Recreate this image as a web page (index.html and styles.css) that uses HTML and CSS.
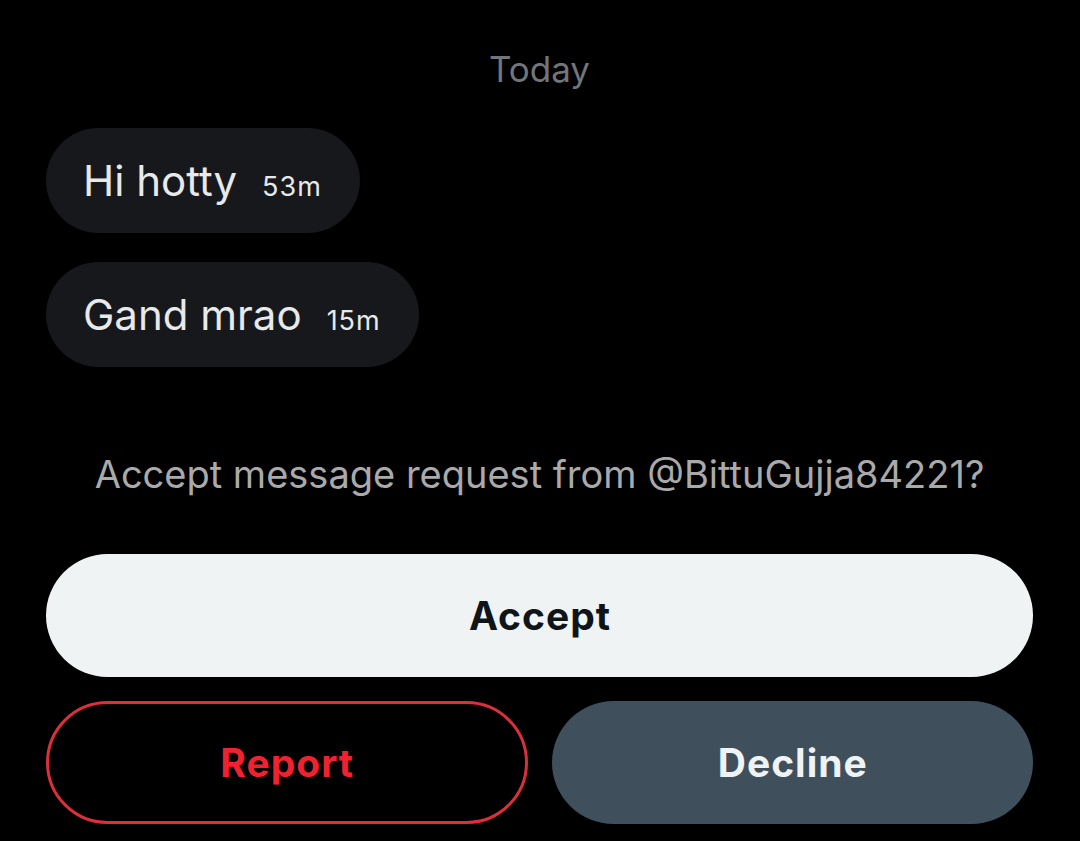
FILE: index.html
```html
<!DOCTYPE html>
<html lang="en">
<head>
<meta charset="utf-8">
<title>Message request</title>
<link rel="stylesheet" href="styles.css">
</head>
<body>
<main class="screen">
  <div class="day">Today</div>
  <div class="messages">
    <div class="bubble"><span class="msg">Hi hotty</span><span class="time">53m</span></div>
    <div class="bubble"><span class="msg">Gand mrao</span><span class="time">15m</span></div>
  </div>
  <p class="prompt">Accept message request from @BittuGujja84221?</p>
  <div class="actions">
    <button class="btn accept">Accept</button>
    <div class="row">
      <button class="btn report">Report</button>
      <button class="btn decline">Decline</button>
    </div>
  </div>
</main>
</body>
</html>
```
FILE: styles.css
```css
html, body {
  margin: 0;
  padding: 0;
  background: #000;
}
body {
  font-family: Inter, Roboto, "Noto Sans", "Liberation Sans", sans-serif;
  width: 1080px;
  height: 841px;
  overflow: hidden;
}
.screen {
  display: flex;
  flex-direction: column;
  padding: 46px 47px 0 46px;
}
.day {
  text-align: center;
  color: #71767b;
  font-size: 35px;
  line-height: 46px;
}
.messages {
  display: flex;
  flex-direction: column;
  align-items: flex-start;
  gap: 29px;
  margin-top: 36px;
}
.bubble {
  display: flex;
  align-items: baseline;
  gap: 25px;
  height: 105px;
  box-sizing: border-box;
  padding: 0 38px 0 37px;
  background: #16181c;
  border-radius: 53px;
  line-height: 105px;
  color: #e7e9ea;
}
.msg {
  font-size: 42px;
}
.time {
  font-size: 27px;
  letter-spacing: 1px;
}
.prompt {
  margin: 84px 0 0;
  text-align: center;
  color: #aaaaaa;
  font-size: 38px;
  line-height: 46px;
}
.actions {
  display: flex;
  flex-direction: column;
  gap: 24px;
  margin-top: 57px;
}
.row {
  display: grid;
  grid-template-columns: 1fr 1fr;
  gap: 24px;
}
.btn {
  font-family: inherit;
  font-weight: 700;
  font-size: 39px;
  letter-spacing: 1px;
  text-indent: 1px;
  height: 123px;
  border-radius: 62px;
  border: none;
  padding: 0;
  box-sizing: border-box;
  cursor: pointer;
}
.accept {
  background: #eff3f4;
  color: #0f1419;
}
.report {
  background: #000;
  color: #f0222f;
  border: 3px solid #d9303b;
}
.decline {
  background: #3f505c;
  color: #eff3f4;
}
```
